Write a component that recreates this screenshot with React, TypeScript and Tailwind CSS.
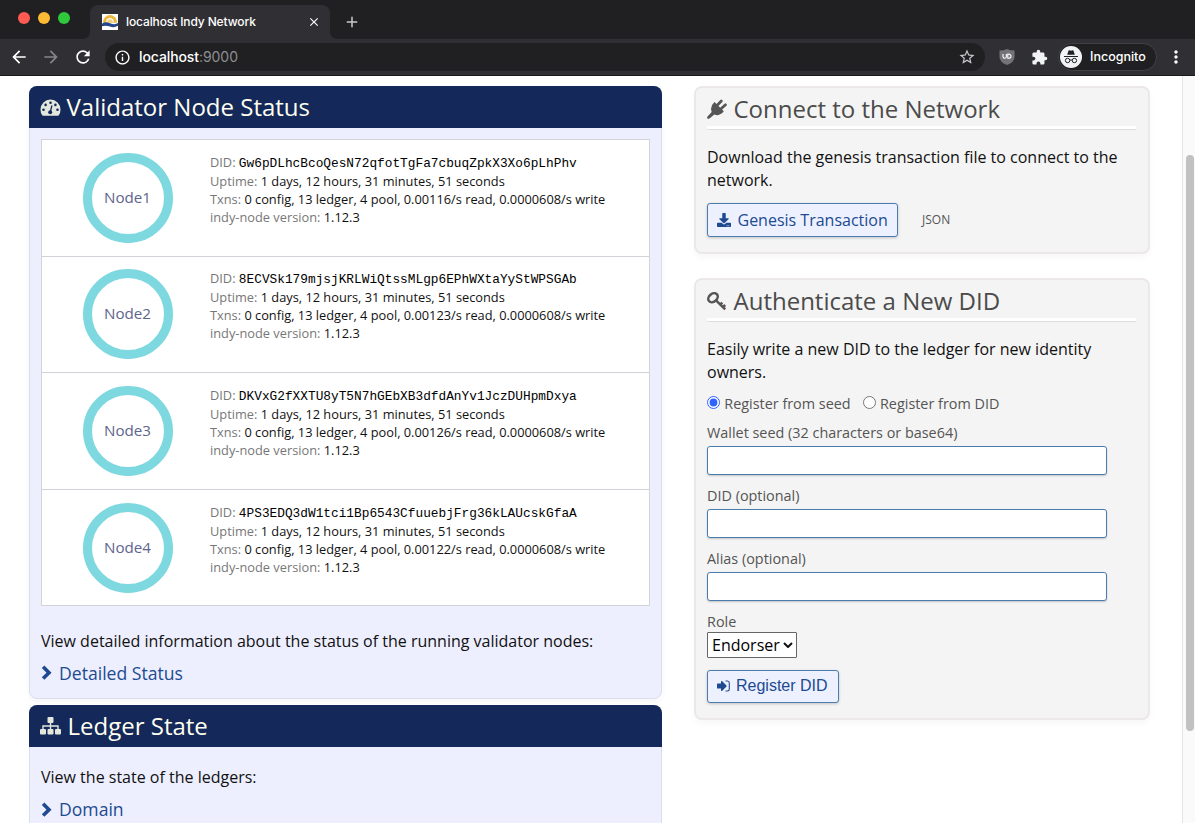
import React from "react";
import { FaDownload } from "react-icons/fa";
import { MdArrowBack, MdArrowForward, MdRefresh, MdInfoOutline, MdStarBorder, MdExtension, MdMoreVert, MdClose, MdAdd } from "react-icons/md";

const nodes = [
  { name: "Node1", did: "Gw6pDLhcBcoQesN72qfotTgFa7cbuqZpkX3Xo6pLhPhv", read: "0.00116" },
  { name: "Node2", did: "8ECVSk179mjsjKRLWiQtssMLgp6EPhWXtaYyStWPSGAb", read: "0.00123" },
  { name: "Node3", did: "DKVxG2fXXTU8yT5N7hGEbXB3dfdAnYv1JczDUHpmDxya", read: "0.00126" },
  { name: "Node4", did: "4PS3EDQ3dW1tci1Bp6543CfuuebjFrg36kLAUcskGfaA", read: "0.00122" },
];

function GaugeIcon() {
  return (
    <svg className="h-[17px] w-[21px] shrink-0" viewBox="0 0 21 17" fill="#e4e8dc">
      <path d="M.5 10.500A10 10 0 0 1 20.500 10.500Q20.500 14 18.800 16.300Q18.500 16.700 18 16.700H3Q2.500 16.700 2.200 16.300Q.5 14 .5 10.500Z" />
      <g fill="#14295a">
        <circle cx="3.500" cy="10.800" r="1.300" />
        <circle cx="5.600" cy="5.900" r="1.300" />
        <circle cx="10.500" cy="3.800" r="1.300" />
        <circle cx="15.400" cy="5.900" r="1.300" />
        <circle cx="17.500" cy="10.800" r="1.300" />
        <circle cx="10.200" cy="13.200" r="2" />
      </g>
      <path d="M10.400 12.500L11.800 7" stroke="#14295a" strokeWidth="1.300" strokeLinecap="round" />
    </svg>
  );
}

function SitemapIcon() {
  return (
    <svg className="mr-px h-[18px] w-[21px] shrink-0" viewBox="0 0 21 18" fill="#e4e8dc">
      <rect x="7.500" y="0" width="6" height="6" rx="1" />
      <rect x="0" y="12" width="6" height="5.500" rx="1" />
      <rect x="7.500" y="12" width="6" height="5.500" rx="1" />
      <rect x="15" y="12" width="6" height="5.500" rx="1" />
      <path d="M10.500 6V12M3 12V9H18V12" fill="none" stroke="#e4e8dc" strokeWidth="1.400" />
    </svg>
  );
}

function PlugIcon() {
  return (
    <svg className="h-5 w-5 shrink-0" viewBox="0 0 20 20" fill="#555">
      <path d="M7.500 3L16.800 12.300Q12.500 17.800 7.300 15.400L2.800 19.200Q1.500 20.200 .3 19.500Q-.3 18.200 1 17L4.700 13Q2.500 7.500 7.500 3Z" />
      <path d="M10 6.500L14.300 2M13.500 10.300L18.500 5.800" stroke="#555" strokeWidth="2.700" strokeLinecap="round" />
    </svg>
  );
}

function KeyIcon() {
  return (
    <svg className="h-[19px] w-5 shrink-0" viewBox="0 0 20 19" fill="none" stroke="#555">
      <ellipse cx="6" cy="5.700" rx="5.200" ry="3.900" transform="rotate(-40 6 5.700)" strokeWidth="2.500" />
      <path d="M9 8.300L18.200 17.400M13.300 12.500L15.300 10.600M16 15.200L18.200 13" strokeWidth="2.500" />
    </svg>
  );
}

function SignInIcon() {
  return (
    <svg className="h-3 w-[13px] shrink-0" viewBox="0 0 13 12" fill="#204a90">
      <path d="M.6 3.500H4V1.400Q4.200.6 5 1.100L9.500 5.500Q9.900 6 9.500 6.500L5 10.900Q4.200 11.400 4 10.600V8.500H.6Q0 8.500 0 7.900V4.100Q0 3.500 .6 3.500Z" />
      <path d="M8.500 1H10.500Q12.300 1 12.300 3V9Q12.300 11 10.500 11H8.500" fill="none" stroke="#204a90" strokeWidth="1.100" />
    </svg>
  );
}

function Favicon() {
  return (
    <svg className="h-4 w-4 shrink-0" viewBox="0 0 16 16">
      <path fill="#fff" d="M0 0h16v16H0z" />
      <path d="M1 8.500A7 7.500 0 0 1 15 8.500L12 9H4Z" fill="#edb83e" />
      <path d="M4 8.500A4 4.500 0 0 1 12 8.500Z" fill="#fff" />
      <path d="M5.200 8.500A2.800 3.200 0 0 1 10.800 8.500Z" fill="#f3ce79" />
      <path d="M0 9.800Q3 7.200 8 9.200T16 9V11.800Q12 14.200 8 12.600T0 12.200Z" fill="#24468d" />
    </svg>
  );
}

function IncognitoIcon() {
  return (
    <svg className="h-[22px] w-[22px] shrink-0" viewBox="0 0 22 22">
      <circle cx="11" cy="11" r="11" fill="#f1f3f4" />
      <path d="M7.200 8.800L8.500 4.800Q8.700 4 9.500 4.300L11 4.800L12.500 4.300Q13.300 4 13.500 4.800L14.800 8.800Z" fill="#202124" />
      <path d="M4 10.500H18" stroke="#202124" strokeWidth="1" />
      <g fill="none" stroke="#202124" strokeWidth="1">
        <circle cx="7.600" cy="14.500" r="2.200" />
        <circle cx="14.400" cy="14.500" r="2.200" />
        <path d="M9.800 14.300Q11 13.400 12.200 14.300" />
      </g>
    </svg>
  );
}

function Browser() {
  return (
    <header className="h-[76px] shrink-0 border-b border-[#18181b] bg-[#303034] font-['Inter','Liberation_Sans',sans-serif] text-white">
      <div className="flex h-[39px] bg-[#202022] pl-[18px]">
        <div className="flex w-[72px] gap-2 pt-3">
          <span className="size-3 rounded-full bg-[#ff5b53]" />
          <span className="size-3 rounded-full bg-[#fcbb32]" />
          <span className="size-3 rounded-full bg-[#2fc73b]" />
        </div>
        <div className="relative mt-[5px] flex h-[34px] w-[240px] items-center rounded-t-[8px] bg-[#303034] pr-[9px] pl-3">
          <svg className="absolute bottom-0 -left-2 size-2" viewBox="0 0 8 8"><path d="M8 0Q8 8 0 8H8Z" fill="#303034" /></svg>
          <svg className="absolute -right-2 bottom-0 size-2" viewBox="0 0 8 8"><path d="M0 0Q0 8 8 8H0Z" fill="#303034" /></svg>
          <Favicon />
          <span className="ml-2 flex-1 whitespace-nowrap text-[12px] font-medium tracking-[-0.12px]">localhost Indy Network</span>
          <MdClose className="size-[14px]" />
        </div>
        <MdAdd className="mt-[13px] ml-[13px] size-[18px] text-[#c8c9cc]" />
      </div>
      <div className="flex h-9 items-center">
        <div className="flex w-[105px] shrink-0 items-center pl-[9px]">
          <MdArrowBack className="size-5" />
          <MdArrowForward className="ml-3 size-5 text-[#85868a]" />
          <MdRefresh className="ml-3 size-5" />
        </div>
        <div className="flex h-7 w-[880px] shrink-0 items-center rounded-full bg-[#202022] pr-[9px] pl-[9px]">
          <MdInfoOutline className="size-[17px]" />
          <span className="ml-[8px] flex-1 pb-px text-[14px] tracking-[-0.05px]"><span className="font-medium tracking-[-0.1px]">localhost</span><span className="text-[#8d8e92]">:9000</span></span>
          <MdStarBorder className="size-[18px] text-[#c8c9cc]" />
        </div>
        <svg className="ml-[14px] h-4 w-4" viewBox="0 0 16 16">
          <path d="M8 0Q11 1.500 15.500 1.500V8Q15.500 13 8 16Q.5 13 .5 8V1.500Q5 1.500 8 0Z" fill="#737478" />
          <path d="M4 5V7.500Q4 9.200 5.600 9.200T7.400 7.500V5M8.800 5V9.200Q12.300 9.400 12 7Q11.700 4.800 8.800 5Z" fill="none" stroke="#fff" strokeWidth="1.100" />
        </svg>
        <MdExtension className="ml-[16px] size-[17px] text-[#f1f3f4]" />
        <div className="ml-[10px] flex h-7 w-[99px] items-center rounded-full border border-[#414144] bg-[#202022] pl-[1px]">
          <IncognitoIcon />
          <span className="ml-2 text-[12.500px] font-medium">Incognito</span>
        </div>
        <MdMoreVert className="ml-[9px] size-5" />
      </div>
    </header>
  );
}

function NodeRow({ node, last }: { node: (typeof nodes)[number]; last: boolean }) {
  return (
    <div className={`flex ${last ? "h-[115px]" : "h-[116.670px] border-b border-[#d2d3d8]"}`}>
      <div className="mt-[12.800px] ml-[41px] flex size-[90px] shrink-0 items-center justify-center rounded-full border-[9px] border-[#7ed8e0] pr-px pb-[1.300px] text-[15.200px] text-[#60658d]">{node.name}</div>
      <div className="ml-[37px] whitespace-nowrap pt-[12.700px] text-[12.800px] leading-[18px] text-[#777]">
        <div className="h-[19px]">DID: <span className="font-['Liberation_Mono',monospace] text-[12.800px] text-black">{node.did}</span></div>
        <div>Uptime: <span className="text-[#111]">1 days, 12 hours, 31 minutes, 51 seconds</span></div>
        <div>Txns: <span className="text-[#111]">0 config, 13 ledger, 4 pool, {node.read}/s read, 0.0000608/s write</span></div>
        <div>indy-node version: <span className="text-[#111]">1.12.3</span></div>
      </div>
    </div>
  );
}

function PanelHead({ icon, children }: { icon: React.ReactNode; children: React.ReactNode }) {
  return (
    <h2 className="-mx-px -mt-px flex h-[42px] items-center gap-[5.500px] rounded-t-[8px] bg-[#14295a] px-[11px] text-[24px] text-[#fffff0]">
      {icon}
      <span className="whitespace-nowrap">{children}</span>
    </h2>
  );
}

function ArrowLink({ children }: { children: React.ReactNode }) {
  return (
    <a className="flex items-center text-[17.600px] leading-6 text-[#204a90]">
      <svg className="h-[15px] w-[13px]" viewBox="0 0 13 15"><path d="M2.100 1.800L8 7.700L2.100 13.600" fill="none" stroke="#204a90" strokeWidth="3.600" /></svg>
      <span className="ml-[5px]">{children}</span>
    </a>
  );
}

function CardTitle({ icon, children }: { icon: React.ReactNode; children: React.ReactNode }) {
  return (
    <h2 className="flex h-[42px] items-center gap-[6.500px] border-b border-[#dedee0] pt-px text-[24px] text-[#4b4b4b] shadow-[inset_0_-3px_0_#fff]">
      {icon}
      <span className="whitespace-nowrap">{children}</span>
    </h2>
  );
}

function Field({ label }: { label: string }) {
  return (
    <label className="mb-[10px] block h-[53px] text-[14.400px] leading-5 text-[#555]">
      {label}
      <input className="mt-[3px] block h-[29px] w-[400px] rounded-[3px] border border-[#4a7dae] bg-white shadow-[0_1px_2px_#0003]" />
    </label>
  );
}

const cardClass = "w-[456px] rounded-[8px] border-2 border-[#ece8ea] bg-[#f4f4f4] pl-[11px] pr-3 shadow-[0_4px_6px_#00000008]";

export default function App() {
  return (
    <div className="flex h-[823px] w-[1195px] flex-col overflow-hidden bg-white font-['Open_Sans',sans-serif] text-[#111]">
      <Browser />
      <div className="flex min-h-0 flex-1">
        <main className="flex min-w-0 flex-1 overflow-hidden pt-[10px] pl-[29px]">
          <div className="w-[633px] shrink-0">
            <section className="h-[613px] rounded-[8px] border border-[#dadded] bg-[#edefff] shadow-[0_3px_6px_#0000000a]">
              <PanelHead icon={<GaugeIcon />}>Validator Node Status</PanelHead>
              <div className="mx-[11px] mt-[11px] border border-[#d2d3d8] bg-white">
                {nodes.map((node, i) => <NodeRow key={node.name} node={node} last={i === 3} />)}
              </div>
              <p className="mt-[23px] ml-[11px] text-[16px] leading-6">View detailed information about the status of the running validator nodes:</p>
              <div className="mt-2 ml-[11px]"><ArrowLink>Detailed Status</ArrowLink></div>
            </section>
            <section className="mt-[6px] h-[200px] rounded-[8px] border border-[#dadded] bg-[#edefff]">
              <PanelHead icon={<SitemapIcon />}>Ledger State</PanelHead>
              <p className="mt-[18px] ml-[11px] text-[16px] leading-6">View the state of the ledgers:</p>
              <div className="mt-2 ml-[11px]"><ArrowLink>Domain</ArrowLink></div>
            </section>
          </div>
          <div className="ml-8 w-[456px] shrink-0">
            <section className={`${cardClass} h-[168px]`}>
              <CardTitle icon={<PlugIcon />}>Connect to the Network</CardTitle>
              <p className="mt-4 text-[16px] leading-[23px]">Download the genesis transaction file to connect to the network.</p>
              <div className="mt-[11px] flex items-center">
                <a className="flex h-[34px] w-[191px] items-center rounded-[3px] border border-[#4a7dae] bg-[#edf1ff] pl-[9px] text-[16px] text-[#204a90] shadow-[0_1px_3px_#0003]">
                  <FaDownload className="size-[14px]" />
                  <span className="ml-[6.500px] whitespace-nowrap">Genesis Transaction</span>
                </a>
                <span className="ml-6 text-[12px] text-[#555]">JSON</span>
              </div>
            </section>
            <section className={`${cardClass} mt-[24px] h-[442px]`}>
              <CardTitle icon={<KeyIcon />}>Authenticate a New DID</CardTitle>
              <p className="mt-4 text-[16px] leading-[23px]">Easily write a new DID to the ledger for new identity owners.</p>
              <div className="mt-[10px] mb-[9px] flex h-5 items-center text-[14.400px] text-[#555]">
                <input type="radio" name="source" defaultChecked className="mb-[3px] size-[13px] accent-[#2f62ff]" />
                <span className="ml-[4.300px]">Register from seed</span>
                <input type="radio" name="source" className="mb-[3px] ml-3 size-[13px]" />
                <span className="ml-[4.300px]">Register from DID</span>
              </div>
              <Field label="Wallet seed (32 characters or base64)" />
              <Field label="DID (optional)" />
              <Field label="Alias (optional)" />
              <div className="text-[14.400px] leading-5 text-[#555]">Role</div>
              <div className="flex h-[26px] w-[90px] items-center justify-between rounded-[1px] border border-[#666] bg-white pr-[3px] pl-1 text-[16px] text-black">
                Endorser
                <svg className="h-[6px] w-[10px]" viewBox="0 0 10 6"><path d="M1 1L5 5L9 1" fill="none" stroke="#111" strokeWidth="2" /></svg>
              </div>
              <button className="mt-3 flex h-[33px] w-[132px] items-center rounded-[3px] border border-[#4a7dae] bg-[#edf1ff] pb-[2px] pl-[9px] font-['Liberation_Sans',sans-serif] text-[16px] text-[#204a90] shadow-[0_1px_3px_#0003]">
                <SignInIcon />
                <span className="ml-[6px] whitespace-nowrap">Register DID</span>
              </button>
            </section>
          </div>
        </main>
        <aside className="w-[13px] shrink-0 border-l border-[#e5e5e5] bg-[#fafafa] pt-[79px] pl-[3px]">
          <div className="h-[576px] w-2 rounded-full bg-[#c1c1c1]" />
        </aside>
      </div>
    </div>
  );
}
